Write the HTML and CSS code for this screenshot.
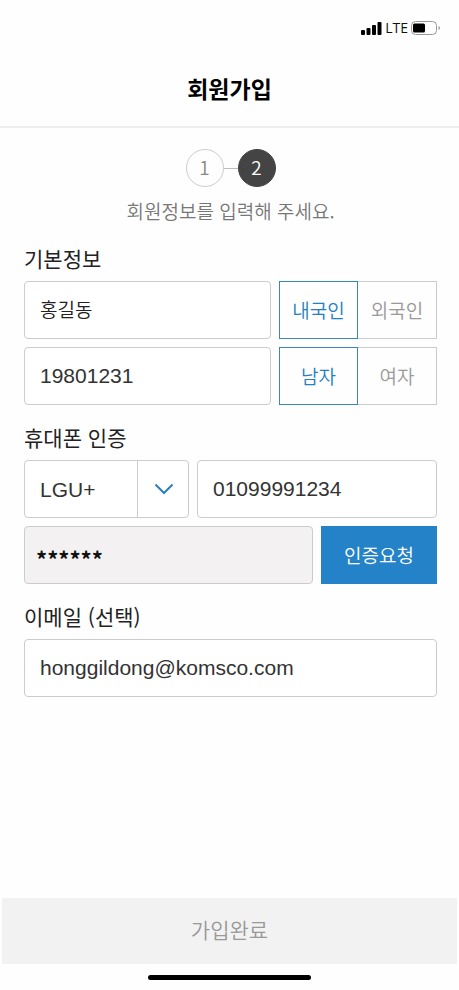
FILE: index.html
```html
<!DOCTYPE html>
<html lang="ko">
<head>
<meta charset="utf-8">
<meta name="viewport" content="width=device-width, initial-scale=1">
<title>회원가입</title>
<link rel="stylesheet" href="styles.css">
</head>
<body>
<div class="status">
  <svg class="signal" viewBox="0 0 21 13" aria-hidden="true">
    <rect x="0" y="8" width="4" height="5" rx="1"/>
    <rect x="5.5" y="6" width="4" height="7" rx="1"/>
    <rect x="11" y="3" width="4" height="10" rx="1"/>
    <rect x="16.5" y="0" width="4" height="13" rx="1"/>
  </svg>
  <span class="network">LTE</span>
  <svg class="battery" viewBox="0 0 30 14" aria-hidden="true">
    <rect x="0.5" y="0.5" width="25" height="13" rx="4" fill="none" stroke="#999"/>
    <rect x="2" y="2.5" width="12" height="9" rx="1.5"/>
    <path d="M27.5 5v4q1.500-.6 1.500-2t-1.500-2z" fill="#999"/>
  </svg>
</div>
<header class="header"><h1>회원가입</h1></header>
<form class="form" id="signup">
  <ol class="steps">
    <li class="step">1</li>
    <li class="step current" aria-current="step">2</li>
  </ol>
  <p class="guide">회원정보를 입력해 주세요.</p>

  <label class="title" for="name">기본정보</label>
  <div class="row basic">
    <input class="field korean" id="name" type="text" value="홍길동">
    <div class="segment" role="radiogroup" aria-label="국적">
      <label class="option"><input type="radio" name="nation" checked><span>내국인</span></label>
      <label class="option"><input type="radio" name="nation"><span>외국인</span></label>
    </div>
  </div>
  <div class="row basic">
    <input class="field" type="text" inputmode="numeric" value="19801231" aria-label="생년월일">
    <div class="segment" role="radiogroup" aria-label="성별">
      <label class="option"><input type="radio" name="gender" checked><span>남자</span></label>
      <label class="option"><input type="radio" name="gender"><span>여자</span></label>
    </div>
  </div>

  <label class="title" for="phone">휴대폰 인증</label>
  <div class="row mobile">
    <div class="picker">
      <select class="field" aria-label="통신사">
        <option>LGU+</option>
        <option>SKT</option>
        <option>KT</option>
      </select>
      <span class="arrow"><svg viewBox="0 0 20 12" aria-hidden="true"><path d="M1.500 1.500l8.500 8.500 8.500-8.500"/></svg></span>
    </div>
    <input class="field" id="phone" type="tel" value="01099991234">
  </div>
  <div class="row verify">
    <input class="field code" type="text" value="******" readonly aria-label="인증번호">
    <button class="request" type="button">인증요청</button>
  </div>

  <label class="title" for="email">이메일 (선택)</label>
  <div class="row">
    <input class="field" id="email" type="email" value="honggildong@komsco.com">
  </div>
</form>
<footer class="footer">
  <button class="submit" type="submit" form="signup">가입완료</button>
  <div class="home"></div>
</footer>
</body>
</html>
```

FILE: styles.css
```css
* {
  box-sizing: border-box;
}

body {
  margin: 0;
  min-height: 100vh;
  display: flex;
  flex-direction: column;
  background: #fefefe;
  color: #222;
  font-family: "Liberation Sans", "Noto Sans CJK KR", sans-serif;
  font-size: 21px;
}

input,
select,
button {
  font: inherit;
  margin: 0;
}

.status {
  display: flex;
  justify-content: flex-end;
  align-items: center;
  gap: 3px;
  height: 56px;
  padding-right: 18px;
}

.signal {
  width: 21px;
  height: 13px;
}

.network {
  font: 14px/20px "Open Sans", sans-serif;
  color: #111;
}

.battery {
  width: 30px;
  height: 14px;
}

.header {
  height: 72px;
  padding-top: 15px;
  border-bottom: 2px solid #eee;
  text-align: center;
}

.header h1 {
  margin: 0;
  font: bold 23px/34px "Noto Sans CJK KR", sans-serif;
  color: #000;
}

.form {
  flex: 1;
  padding: 21px 22px 24px 24px;
}

.steps {
  display: flex;
  justify-content: center;
  margin: 0;
  padding: 0;
  list-style: none;
}

.step {
  display: flex;
  align-items: center;
  justify-content: center;
  width: 38px;
  height: 38px;
  padding-bottom: 2px;
  border: 1px solid #ccc;
  border-radius: 50%;
  color: #888;
  font: 350 19px/24px "Noto Sans CJK KR", sans-serif;
}

.step.current {
  position: relative;
  margin-left: 14px;
  border-color: #444;
  background: #444;
  color: #fff;
}

.step.current::before {
  content: "";
  position: absolute;
  right: 37px;
  top: 18px;
  width: 14px;
  border-top: 1px solid #bbb;
}

.guide {
  margin: 9px 0 0;
  text-align: center;
  color: #777;
  font: 350 19px/30px "Noto Sans CJK KR", sans-serif;
}

.title {
  display: block;
  margin: 18px 0 9px;
  font: 400 21px/28px "Noto Sans CJK KR", sans-serif;
}

.row {
  display: grid;
  gap: 8px;
}

.row + .row {
  margin-top: 8px;
}

.basic {
  grid-template-columns: 61fr 39fr;
}

.mobile {
  grid-template-columns: 165fr 240fr;
}

.verify {
  grid-template-columns: 1fr 116px;
}

.field {
  width: 100%;
  min-width: 0;
  height: 58px;
  padding: 0 15px;
  border: 1px solid #ccc;
  border-radius: 4px;
  outline: 0;
  background: #fff;
  color: #333;
}

.field.korean {
  padding-bottom: 4px;
  font: 350 19px "Noto Sans CJK KR", sans-serif;
  color: #222;
}

.field.code {
  padding: 6px 11px 0;
  background: #f4f1f2;
  color: #111;
  font: bold 22px "Noto Sans CJK KR", sans-serif;
}

.segment {
  display: flex;
}

.option {
  position: relative;
  flex: 1;
  display: flex;
}

.option input {
  position: absolute;
  inset: 0;
  opacity: 0;
}

.option span {
  flex: 1;
  display: flex;
  align-items: center;
  justify-content: center;
  border: 1px solid #ccc;
  color: #999;
  font: 350 19px/30px "Noto Sans CJK KR", sans-serif;
}

.option + .option span {
  border-left: 0;
}

.option input:checked + span {
  border-color: #3a87c0;
  color: #2480c2;
}

.picker {
  position: relative;
}

.picker .field {
  appearance: none;
}

.arrow {
  position: absolute;
  inset: 0 0 0 auto;
  width: 52px;
  display: flex;
  align-items: center;
  justify-content: center;
  border-left: 1px solid #ccc;
  pointer-events: none;
}

.arrow svg {
  width: 20px;
  height: 12px;
  fill: none;
  stroke: #2b7fbd;
  stroke-width: 2;
}

.request {
  padding: 0;
  border: 0;
  background: #2482c8;
  color: #fff;
  font: 350 19px/30px "Noto Sans CJK KR", sans-serif;
}

.footer {
  padding: 0 2px 10px;
}

.submit {
  display: block;
  width: 100%;
  height: 66px;
  padding: 0 0 4px;
  border: 0;
  background: #f2f2f2;
  color: #999;
  font: 350 21px/32px "Noto Sans CJK KR", sans-serif;
}

.home {
  width: 36%;
  height: 5px;
  margin: 11px auto 0;
  border-radius: 3px;
  background: #000;
}
```
